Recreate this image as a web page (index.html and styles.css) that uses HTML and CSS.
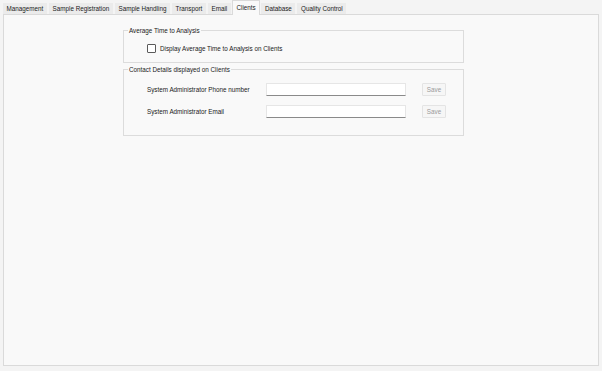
FILE: index.html
```html
<!DOCTYPE html>
<html>
<head>
<meta charset="utf-8">
<link rel="stylesheet" href="styles.css">
</head>
<body>
<div class="window">
  <div class="tabs">
    <div class="tab">Management</div>
    <div class="tab">Sample Registration</div>
    <div class="tab">Sample Handling</div>
    <div class="tab">Transport</div>
    <div class="tab">Email</div>
    <div class="tab active">Clients</div>
    <div class="tab">Database</div>
    <div class="tab">Quality Control</div>
  </div>
  <div class="panel">
    <div class="group group-avg">
      <div class="group-title">Average Time to Analysis</div>
      <label class="check-row">
        <span class="checkbox"></span>
        <span>Display Average Time to Analysis on Clients</span>
      </label>
    </div>
    <div class="group group-contact">
      <div class="group-title">Contact Details displayed on Clients</div>
      <div class="field-row">
        <span class="field-label">System Administrator Phone number</span>
        <span class="input"></span>
        <span class="btn">Save</span>
      </div>
      <div class="field-row">
        <span class="field-label">System Administrator Email</span>
        <span class="input"></span>
        <span class="btn">Save</span>
      </div>
    </div>
  </div>
</div>
</body>
</html>
```
FILE: styles.css
```css
html, body {
  margin: 0;
  padding: 0;
}
body {
  width: 602px;
  height: 371px;
  background: #f4f4f4;
  font-family: "Liberation Sans", Arial, sans-serif;
  font-size: 6.3px;
  color: #1a1a1a;
  overflow: hidden;
}
.window {
  padding: 0 3px 0 3px;
}
.tabs {
  display: flex;
  align-items: flex-end;
  height: 14px;
}
.tab {
  height: 11px;
  line-height: 11px;
  padding: 0 3.6px;
  margin-right: 2px;
  background: #ebebeb;
  white-space: nowrap;
}
.tab.active {
  height: 14px;
  line-height: 13px;
  background: #f9f9f9;
  border: 1px solid #dadada;
  border-bottom: none;
  margin: 0 1px 0 -1px;
  position: relative;
  top: 1px;
  z-index: 1;
}
.panel {
  height: 352px;
  background: #f9f9f9;
  border: 1px solid #dadada;
  padding: 15px 0 0 119px;
  box-sizing: border-box;
}
.group {
  width: 341px;
  box-sizing: border-box;
  border: 1px solid #dcdcdc;
  padding-left: 23px;
}
.group-title {
  display: inline-block;
  background: #f9f9f9;
  margin: -4px 0 0 -19px;
  padding: 0 1px;
  line-height: 8px;
  vertical-align: top;
}
.group-avg {
  height: 33px;
}
.group-contact {
  height: 67px;
  margin-top: 6px;
}
.check-row {
  display: flex;
  align-items: center;
  gap: 4px;
  margin-top: 6px;
  line-height: 9px;
}
.checkbox {
  width: 7px;
  height: 7px;
  border: 1px solid #5a5a5a;
  border-radius: 1px;
  background: #fff;
}
.field-row {
  display: flex;
  align-items: center;
  height: 13px;
  margin-top: 6px;
}
.field-row + .field-row {
  margin-top: 9px;
}
.field-label {
  width: 119px;
}
.input {
  width: 140px;
  height: 13px;
  box-sizing: border-box;
  background: #fff;
  border: 1px solid #e6e6e6;
  border-bottom: 1px solid #8a8a8a;
}
.btn {
  margin-left: 16px;
  width: 24px;
  height: 13px;
  box-sizing: border-box;
  background: #f6f6f6;
  border: 1px solid #e4e4e4;
  border-radius: 1px;
  color: #9a9a9a;
  text-align: center;
  line-height: 11px;
}
```
